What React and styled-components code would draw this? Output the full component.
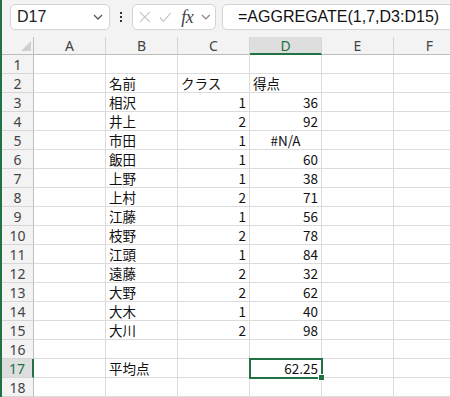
import React from "react";
import styled, { createGlobalStyle } from "styled-components";

const GREEN = "#217346";

const GlobalStyle = createGlobalStyle`
  body {
    margin: 0;
    background: #fff;
    font-family: "Noto Sans", "Noto Sans CJK JP", sans-serif;
  }
`;

const Frame = styled.div`
  width: 448px;
  height: 397px;
  overflow: hidden;
  border-left: 2px solid ${GREEN};
  display: flex;
  flex-direction: column;
  background: #fff;
`;

const Toolbar = styled.div`
  height: 37px;
  flex: none;
  display: flex;
  align-items: flex-start;
  padding: 4px 0 0 8px;
  background: #f3f3f3;
  box-sizing: border-box;
`;

const Box = styled.div`
  box-sizing: border-box;
  height: 26px;
  background: #fff;
  border: 1px solid #d4d4d4;
  border-radius: 5px;
  display: flex;
  align-items: center;
`;

const NameBox = styled(Box)`
  width: 100px;
  padding: 0 6px 0 6px;
  justify-content: space-between;
  font-family: "Liberation Sans", Arial, sans-serif;
  font-size: 16px;
  color: #222;
`;

const Dots = styled.div`
  width: 22px;
  height: 26px;
  display: flex;
  flex-direction: column;
  align-items: center;
  justify-content: center;
  gap: 2px;

  span {
    width: 2px;
    height: 2px;
    background: #333;
  }
`;

const FxBox = styled(Box)`
  width: 84px;
  padding: 0 4px 0 6px;
  gap: 8px;
`;

const Fx = styled.span`
  font-family: "Liberation Serif", serif;
  font-style: italic;
  font-size: 18px;
  color: #444;
  margin-left: 2px;
  letter-spacing: -0.5px;
`;

const FormulaBox = styled(Box)`
  flex: 1;
  margin-left: 6px;
  margin-right: -10px;
  padding-left: 15px;
  font-family: "Liberation Sans", Arial, sans-serif;
  font-size: 16px;
  color: #111;
`;

const Sheet = styled.div`
  display: grid;
  grid-template-columns: 32px repeat(6, 72px);
  grid-template-rows: 18px repeat(18, 19px);
`;

const Cell = styled.div`
  box-sizing: border-box;
  border-right: 1px solid #dcdcdc;
  border-bottom: 1px solid #dcdcdc;
  padding: 0 3px;
  display: flex;
  align-items: center;
  justify-content: ${(p) =>
    p.align === "right" ? "flex-end" : p.align === "center" ? "center" : "flex-start"};
  font-family: "Noto Sans CJK JP", "Noto Sans", sans-serif;
  font-size: 13.5px;
  color: #111;
  white-space: nowrap;
  overflow: visible;
  position: relative;
  ${(p) =>
    p.selected &&
    `
    outline: 2px solid ${GREEN};
    outline-offset: -1px;
    z-index: 2;
    &::after {
      content: "";
      position: absolute;
      right: -4px;
      bottom: -4px;
      width: 5px;
      height: 5px;
      background: ${GREEN};
      border: 1px solid #fff;
    }
  `}
`;

const HeadCell = styled.div`
  box-sizing: border-box;
  display: flex;
  align-items: center;
  justify-content: center;
  font-family: "Noto Sans", sans-serif;
  font-size: 14px;
  background: ${(p) => (p.active ? "#dedede" : "#f3f3f3")};
  color: ${(p) => (p.active ? GREEN : "#444")};
`;

const ColHead = styled(HeadCell)`
  border-right: 1px solid #d6d6d6;
  border-bottom: ${(p) => (p.active ? `2px solid ${GREEN}` : "1px solid #bdbdbd")};
`;

const RowHead = styled(HeadCell)`
  border-bottom: 1px solid #d6d6d6;
  border-right: ${(p) => (p.active ? `2px solid ${GREEN}` : "1px solid #bdbdbd")};
`;

const Corner = styled.div`
  box-sizing: border-box;
  background: #f3f3f3;
  border-right: 1px solid #bdbdbd;
  border-bottom: 1px solid #bdbdbd;
  display: flex;
  align-items: flex-end;
  justify-content: flex-end;
  padding: 0 2px 3px 0;
`;

const Chevron = ({ color = "#555" }) => (
  <svg width="10" height="6" viewBox="0 0 10 6">
    <polyline points="1,1 5,5 9,1" fill="none" stroke={color} strokeWidth="1.3" />
  </svg>
);

const cols = ["A", "B", "C", "D", "E", "F"];

const data = {
  2: { B: "名前", C: "クラス", D: "得点" },
  3: { B: "相沢", C: 1, D: 36 },
  4: { B: "井上", C: 2, D: 92 },
  5: { B: "市田", C: 1, D: "#N/A" },
  6: { B: "飯田", C: 1, D: 60 },
  7: { B: "上野", C: 1, D: 38 },
  8: { B: "上村", C: 2, D: 71 },
  9: { B: "江藤", C: 1, D: 56 },
  10: { B: "枝野", C: 2, D: 78 },
  11: { B: "江頭", C: 1, D: 84 },
  12: { B: "遠藤", C: 2, D: 32 },
  13: { B: "大野", C: 2, D: 62 },
  14: { B: "大木", C: 1, D: 40 },
  15: { B: "大川", C: 2, D: 98 },
  17: { B: "平均点", D: "62.25" },
};

const alignOf = (v) => {
  if (v === "#N/A") return "center";
  if (typeof v === "number" || /^[\d.]+$/.test(String(v))) return "right";
  return "left";
};

export default function App() {
  const rows = Array.from({ length: 18 }, (_, i) => i + 1);
  return (
    <>
      <GlobalStyle />
      <Frame>
        <Toolbar>
          <NameBox>
            <span>D17</span>
            <Chevron />
          </NameBox>
          <Dots>
            <span />
            <span />
            <span />
          </Dots>
          <FxBox>
            <svg width="12" height="12" viewBox="0 0 12 12">
              <path d="M1 1 L11 11 M11 1 L1 11" stroke="#c4c4c4" strokeWidth="1.2" fill="none" />
            </svg>
            <svg width="13" height="11" viewBox="0 0 13 11">
              <polyline points="1,5.5 4.5,9.5 12,1" stroke="#c4c4c4" strokeWidth="1.2" fill="none" />
            </svg>
            <Fx>fx</Fx>
            <Chevron color="#888" />
          </FxBox>
          <FormulaBox>=AGGREGATE(1,7,D3:D15)</FormulaBox>
        </Toolbar>
        <Sheet>
          <Corner>
            <svg width="10" height="10" viewBox="0 0 10 10">
              <polygon points="10,0 10,10 0,10" fill="#d0d0d0" />
            </svg>
          </Corner>
          {cols.map((c) => (
            <ColHead key={c} active={c === "D"}>
              {c}
            </ColHead>
          ))}
          {rows.map((r) => (
            <React.Fragment key={r}>
              <RowHead active={r === 17}>{r}</RowHead>
              {cols.map((c) => {
                const v = data[r] && data[r][c];
                return (
                  <Cell key={c} align={v !== undefined ? alignOf(v) : "left"} selected={r === 17 && c === "D"}>
                    {v}
                  </Cell>
                );
              })}
            </React.Fragment>
          ))}
        </Sheet>
      </Frame>
    </>
  );
}
